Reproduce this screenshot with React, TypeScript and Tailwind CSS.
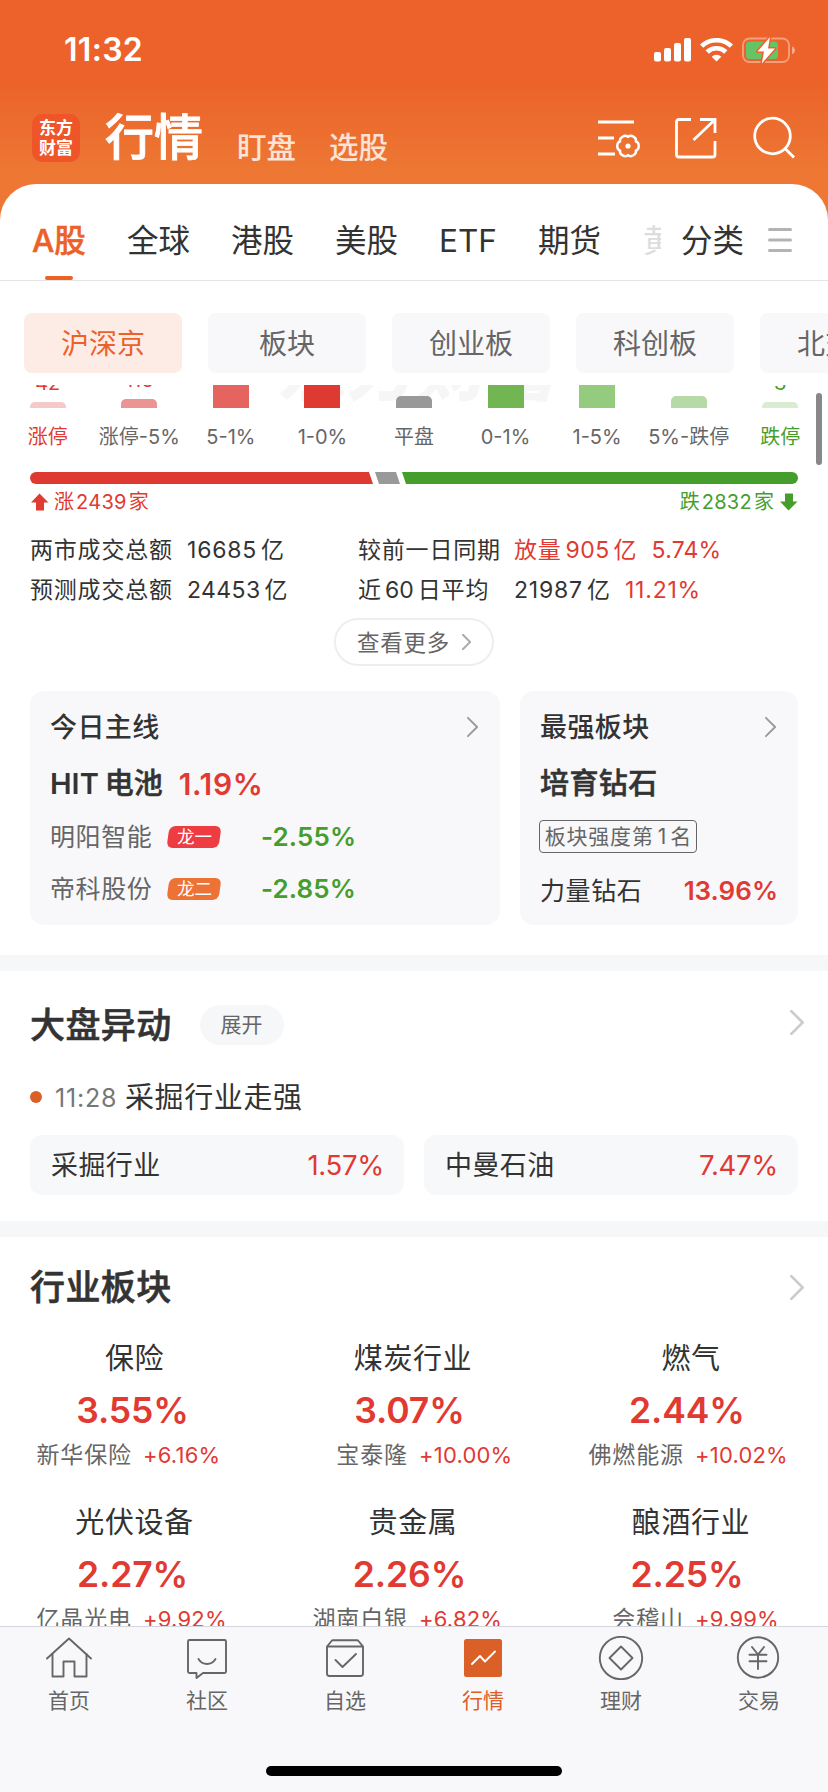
import React from "react";

const tabs = ["全球", "港股", "美股", "ETF", "期货"];

const markets = ["沪深京", "板块", "创业板", "科创板", "北交所"];

const buckets = [
  { label: "涨停", count: "42", bar: "h-1.5 bg-[#f5c9c9]", text: "text-[#e03a32]" },
  { label: "涨停-5%", count: "116", bar: "h-[9px] bg-[#ea9594]", text: "text-[#e03a32]" },
  { label: "5-1%", count: "", bar: "h-10 bg-[#e5645f]", text: "text-[#e03a32]" },
  { label: "1-0%", count: "", bar: "h-10 bg-[#df3a32]", text: "text-[#e03a32]" },
  { label: "平盘", count: "", bar: "h-3 bg-[#999999]", text: "text-[#666666]" },
  { label: "0-1%", count: "", bar: "h-10 bg-[#72b653]", text: "text-[#459e2c]" },
  { label: "1-5%", count: "", bar: "h-10 bg-[#95cb7e]", text: "text-[#459e2c]" },
  { label: "5%-跌停", count: "", bar: "h-3 bg-[#b6daa6]", text: "text-[#459e2c]" },
  { label: "跌停", count: "3", bar: "h-1.5 bg-[#d9ecd1]", text: "text-[#459e2c]" },
];

const leaders = [
  { name: "明阳智能", tag: "龙一", color: "bg-[#ed3d42]", change: "-2.55%" },
  { name: "帝科股份", tag: "龙二", color: "bg-[#ed7236]", change: "-2.85%" },
];

const movers = [
  { name: "采掘行业", change: "1.57%" },
  { name: "中曼石油", change: "7.47%" },
];

const industries = [
  { name: "保险", change: "3.55%", stock: "新华保险", stockChange: "+6.16%" },
  { name: "煤炭行业", change: "3.07%", stock: "宝泰隆", stockChange: "+10.00%" },
  { name: "燃气", change: "2.44%", stock: "佛燃能源", stockChange: "+10.02%" },
  { name: "光伏设备", change: "2.27%", stock: "亿晶光电", stockChange: "+9.92%" },
  { name: "贵金属", change: "2.26%", stock: "湖南白银", stockChange: "+6.82%" },
  { name: "酿酒行业", change: "2.25%", stock: "会稽山", stockChange: "+9.99%" },
];

// Each column drifts slightly to the right
const nameInset = ["pr-[7px]", "pr-[2px]", "pl-[2px]"];
const changeInset = ["pr-[11px]", "pr-[9px]", "pr-[6px]"];

const navItems = [
  {
    label: "首页",
    icon: (
      <>
        <path d="M2 22.5L24 2.5L46 22.5" />
        <path d="M7.5 18V40.5H18.5V25.5H29.5V40.5H41.5V18" />
      </>
    ),
  },
  {
    label: "社区",
    icon: (
      <>
        <path d="M6.5 4H41.5Q43 4 43 5.5V35.5Q43 37 41.5 37H20L13.5 42V37H6.5Q5 37 5 35.5V5.5Q5 4 6.5 4Z" />
        <path d="M15.5 23Q18.5 28 24 28T32.5 23" />
      </>
    ),
  },
  {
    label: "自选",
    icon: (
      <>
        <path d="M6 10.5L10.5 5Q11 4.3 12 4.3H36Q37 4.3 37.5 5L42 10.5V37.5Q42 40 39.5 40H8.5Q6 40 6 37.5ZM6 10.5H42" />
        <path d="M14.5 24L21.5 31L35 18" />
      </>
    ),
  },
  {
    label: "行情",
    active: true,
    icon: (
      <>
        <rect x="5" y="3" width="38" height="38" rx="2.5" fill="#db6027" stroke="none" />
        <path d="M13 28L21 20L26 25.5L36 15.5" stroke="#fff" />
      </>
    ),
  },
  {
    label: "理财",
    icon: (
      <>
        <circle cx="24" cy="22" r="21.2" />
        <path d="M24 10.5L35.5 22L24 33.5L12.5 22Z" />
      </>
    ),
  },
  {
    label: "交易",
    icon: (
      <>
        <circle cx="23" cy="21.5" r="20.2" />
        <path d="M17 11L23 18.5L29 11M14.5 18.7H31.5M14.5 25.3H31.5M23 18.5V33" />
      </>
    ),
  },
];

const Chevron: React.FC<{ className: string; strokeWidth?: number }> = ({ className, strokeWidth = 2 }) => (
  <svg className={className} viewBox="0 0 12 22" fill="none" stroke="currentColor" strokeWidth={strokeWidth} strokeLinecap="round">
    <path d="M1 1L11 11L1 21" />
  </svg>
);

const StatusBar: React.FC = () => (
  <div className="flex h-[100px] items-center justify-between pl-16 pr-8 text-white">
    <span className="text-[32px] font-semibold leading-10 tracking-[0.3px]">11:32</span>
    <div className="flex items-center">
      <svg width="37" height="24" viewBox="0 0 37 24" fill="currentColor">
        <rect x="0" y="14" width="7" height="9.5" rx="2" />
        <rect x="10" y="10" width="7" height="13.5" rx="2" />
        <rect x="20" y="5" width="7" height="18.5" rx="2" />
        <rect x="30" y="0" width="7" height="23.5" rx="2" />
      </svg>
      <svg className="ml-[9px]" width="33" height="24" viewBox="0 0 33 24" fill="none" stroke="currentColor" strokeWidth="4.6">
        <path d="M1.6 8.2A21.5 21.5 0 0 1 31.4 8.2" />
        <path d="M7.2 14A13.5 13.5 0 0 1 25.8 14" />
        <path d="M11.7 18.7A6.8 6.8 0 0 1 21.3 18.7L16.5 23.5Z" fill="currentColor" stroke="none" />
      </svg>
      <svg className="ml-[9px]" width="54" height="28" viewBox="0 0 54 28" fill="none">
        <rect x="1" y="2.5" width="46" height="23.5" rx="6.5" stroke="#fff" strokeOpacity="0.4" strokeWidth="1.8" />
        <path d="M50 10.5Q53 11.5 53 14.3T50 18.2Z" fill="#fff" fillOpacity="0.45" />
        <rect x="4" y="5.5" width="32" height="17.5" rx="3.5" fill="#65c466" />
        <path d="M28 1L15.5 15.5H22L19.8 27.5L33 12.5H26Z" fill="#fff" stroke="#ec622a" strokeWidth="3" strokeLinejoin="round" paintOrder="stroke" />
      </svg>
    </div>
  </div>
);

const Header: React.FC = () => (
  <div className="flex h-[84px] items-start px-8 text-white">
    <div className="mt-3.5 flex size-12 flex-col items-center justify-center rounded-[10px] bg-[#ee5528] text-[17px] font-bold leading-5">
      <span>东方</span>
      <span>财富</span>
    </div>
    <h1 className="ml-[25px] mt-2 text-[49px] font-medium leading-[60px] [-webkit-text-stroke:0.8px_white]">行情</h1>
    <span className="ml-[34px] mt-[27px] text-[29.5px] font-medium leading-10 text-white/80">盯盘</span>
    <span className="ml-[33px] mt-[27px] text-[29.5px] font-medium leading-10 text-white/80">选股</span>
    <div className="ml-auto mt-4 flex gap-[34px]">
      <svg width="43" height="44" viewBox="0 0 43 44" fill="none" stroke="currentColor" strokeWidth="2.8">
        <path d="M0 6H36M0 22H16M0 38H17" />
        <g transform="translate(30 30)" strokeWidth="2.4">
          {[0, 60, 120, 180, 240, 300].map((angle) => (
            <path key={angle} d="M0 -9.2C3 -11.8 8.7 -8.5 7.97 -4.6" transform={`rotate(${angle})`} strokeLinecap="round" />
          ))}
          <circle r="2.6" fill="currentColor" stroke="none" />
        </g>
      </svg>
      <svg width="42" height="44" viewBox="0 0 42 44" fill="none" stroke="currentColor" strokeWidth="2.8">
        <path d="M16 3.5H4Q1.5 3.5 1.5 6V38.5Q1.5 41 4 41H37.5Q40 41 40 38.5V25" />
        <path d="M25 3.5H40V17M39 4.5L18.5 24" />
      </svg>
      <svg className="ml-px" width="44" height="44" viewBox="0 0 44 44" fill="none" stroke="currentColor" strokeWidth="2.8">
        <circle cx="20.5" cy="20" r="17.8" />
        <path d="M33 32.5L42 41.5" />
      </svg>
    </div>
  </div>
);

const Tabs: React.FC = () => (
  <div className="flex h-[97px] items-stretch border-b border-[#e4e4e4] pl-8 pr-9 text-[31.5px] leading-[113px] text-[#333333]">
    <div className="relative mr-[43px] w-[52px] whitespace-nowrap font-medium text-[#eb6128] [-webkit-text-stroke:0.5px_#eb6128]">
      A股
      <div className="absolute bottom-0 left-[13px] h-1 w-7 rounded-[2px] bg-[#eb6128]" />
    </div>
    <div className="flex gap-[41px]">
      {tabs.map((tab) => (
        <span key={tab}>{tab}</span>
      ))}
    </div>
    <div className="ml-[42px] w-[18px] overflow-hidden text-[#dddddd]">黄金</div>
    <span className="ml-auto">分类</span>
    <svg className="ml-6 mt-[42px]" width="24" height="28" viewBox="0 0 24 28" stroke="#b3b3b3" strokeWidth="3" strokeLinecap="round">
      <path d="M1.5 3.5H22.5M1.5 14H22.5M1.5 24.5H22.5" />
    </svg>
  </div>
);

const Distribution: React.FC = () => (
  <>
    <div className="relative h-[23px] overflow-hidden">
      <div className="absolute bottom-0 left-[276px] text-[70px] font-black italic leading-[76px] text-[#f6f6f6]">东方财富</div>
      <div className="relative mx-[2px] grid h-full grid-cols-9">
        {buckets.map((bucket) => (
          <div key={bucket.label} className="flex h-[23px] flex-col items-center justify-end">
            <span className={`mb-[7px] shrink-0 text-[20px] leading-6 ${bucket.text}`}>{bucket.count}</span>
            <div className={`w-9 shrink-0 rounded-t-[5px] ${bucket.bar}`} />
          </div>
        ))}
      </div>
    </div>
    <div className="mx-[2px] mt-[17px] grid grid-cols-9 text-center text-[20px] leading-6 text-[#666666]">
      {buckets.map((bucket) => (
        <span key={bucket.label} className="whitespace-nowrap first:text-[#e03a32] last:text-[#459e2c]">
          {bucket.label}
        </span>
      ))}
    </div>
    <svg className="mx-[30px] mt-[23px] block" width="768" height="12" viewBox="0 0 768 12">
      <path d="M6 0H339L343 12H6A6 6 0 0 1 6 0Z" fill="#df3a32" />
      <path d="M345 0H366L370 12H349Z" fill="#999999" />
      <path d="M372 0H762A6 6 0 0 1 762 12H376Z" fill="#459e2c" />
    </svg>
    <div className="mt-1.5 flex h-6 items-center justify-between px-[30px] text-[20px] leading-6">
      <div className="flex items-center gap-[5px] text-[#e03a32]">
        <svg width="19" height="18" viewBox="0 0 19 18" fill="currentColor">
          <path d="M9.5 0.5L18.5 9.5H14V17.5H6V9.5H1Z" />
        </svg>
        <span className="flex gap-[2px]">
          <span>涨</span>
          <span className="tracking-[0.3px]">2439</span>
          <span>家</span>
        </span>
      </div>
      <div className="flex items-center gap-[5px] text-[#459e2c]">
        <span className="flex gap-[2px]">
          <span>跌</span>
          <span className="tracking-[0.3px]">2832</span>
          <span>家</span>
        </span>
        <svg width="19" height="18" viewBox="0 0 19 18" fill="currentColor">
          <path d="M9.5 17.5L18.5 8.5H14V0.5H6V8.5H1Z" />
        </svg>
      </div>
    </div>
  </>
);

const Turnover: React.FC = () => (
  <div className="mt-4 grid grid-cols-[328px_1fr] pl-[30px] text-[23px] leading-10 text-[#333333]">
    <div className="flex">
      <span className="w-[157px] tracking-[0.8px]">两市成交总额</span>
      <span className="tracking-[0.8px]">16685</span>
      <span className="ml-1">亿</span>
    </div>
    <div className="flex">
      <span className="w-[156px] tracking-[0.8px]">较前一日同期</span>
      <span className="flex gap-1 text-[#e03a32]">
        <span className="tracking-[0.8px]">放量</span>
        <span className="tracking-[0.4px]">905</span>
        <span>亿</span>
      </span>
      <span className="ml-[15px] tracking-[0.2px] text-[#e03a32]">5.74%</span>
    </div>
    <div className="flex">
      <span className="w-[157px] tracking-[0.8px]">预测成交总额</span>
      <span className="tracking-[0.4px]">24453</span>
      <span className="ml-1">亿</span>
    </div>
    <div className="flex">
      <span className="flex w-[156px] gap-1">
        <span>近</span>
        <span>60</span>
        <span className="tracking-[0.8px]">日平均</span>
      </span>
      <span className="tracking-[0.8px]">21987</span>
      <span className="ml-1">亿</span>
      <span className="ml-[15px] tracking-[0.8px] text-[#e03a32]">11.21%</span>
    </div>
  </div>
);

const Highlights: React.FC = () => (
  <div className="mx-[30px] mt-[25px] grid h-[234px] grid-cols-[470px_278px] gap-5 text-[#333333]">
    <div className="rounded-[14px] bg-[#f8f8fa] px-5 pt-[17px]">
      <div className="flex h-10 items-center justify-between pr-0.5">
        <span className="text-[27px] font-medium leading-10 tracking-[0.4px]">今日主线</span>
        <Chevron className="-mt-0.5 h-[22px] w-[11px] text-[#999999]" />
      </div>
      <div className="mt-4 flex text-[29px] leading-10">
        <span className="font-semibold">HIT</span>
        <span className="ml-1.5 font-medium [-webkit-text-stroke:0.5px_#333333]">电池</span>
        <span className="ml-4 text-[30px] font-semibold tracking-[0.6px] text-[#e03a32]">1.19%</span>
      </div>
      <div className="mt-[13px] flex flex-col gap-3">
        {leaders.map((leader) => (
          <div key={leader.name} className="flex h-10 items-center">
            <span className="w-[118px] text-[25px] leading-10 tracking-[0.6px] text-[#666666]">{leader.name}</span>
            <div className={`flex h-[22px] w-[52px] -skew-x-[8deg] items-center justify-center rounded-[6px] ${leader.color}`}>
              <span className="skew-x-[8deg] text-[17.5px] leading-[22px] text-white">{leader.tag}</span>
            </div>
            <span className="ml-[41px] text-[26px] font-semibold leading-10 tracking-[0.1px] text-[#459e2c]">{leader.change}</span>
          </div>
        ))}
      </div>
    </div>
    <div className="rounded-[14px] bg-[#f8f8fa] px-5 pt-[17px]">
      <div className="flex h-10 items-center justify-between pr-0.5">
        <span className="text-[27px] font-medium leading-10 tracking-[0.4px]">最强板块</span>
        <Chevron className="-mt-0.5 h-[22px] w-[11px] text-[#999999]" />
      </div>
      <div className="mt-4 text-[29px] font-medium leading-10 tracking-[0.4px] [-webkit-text-stroke:0.5px_#333333]">培育钻石</div>
      <div className="-ml-px mt-4 flex h-[33px] w-[158px] items-center justify-center gap-1 whitespace-nowrap rounded-[4px] border-[1.5px] border-[#666666] text-[21px] leading-[30px] text-[#666666]">
        <span className="tracking-[0.8px]">板块强度第</span>
        <span>1</span>
        <span>名</span>
      </div>
      <div className="mt-[18px] flex items-center justify-between leading-10">
        <span className="text-[25px] tracking-[0.6px]">力量钻石</span>
        <span className="text-[26px] font-semibold text-[#e03a32]">13.96%</span>
      </div>
    </div>
  </div>
);

const Movement: React.FC = () => (
  <section className="h-[250px] pt-[34px] text-[#333333]">
    <div className="flex h-10 items-center pl-[30px] pr-6">
      <h2 className="text-[35px] font-medium leading-10 tracking-[0.4px] [-webkit-text-stroke:0.6px_#333333]">大盘异动</h2>
      <span className="ml-7 h-10 w-[84px] rounded-full bg-[#f6f7f9] text-center text-[21px] leading-10 text-[#666666]">展开</span>
      <Chevron className="-mt-1.5 ml-auto h-[25px] w-3.5 text-[#cccccc]" strokeWidth={2.4} />
    </div>
    <div className="mt-8 flex h-10 items-center pl-[30px]">
      <span className="size-3 rounded-full bg-[#db6027]" />
      <span className="ml-[13px] w-[70px] pt-0.5 text-[25px] leading-10 tracking-[0.8px] text-[#777777]">11:28</span>
      <span className="pt-px text-[29px] leading-10 tracking-[0.6px]">采掘行业走强</span>
    </div>
    <div className="mx-[30px] mt-[18px] grid grid-cols-2 gap-5">
      {movers.map((mover) => (
        <div key={mover.name} className="flex h-[60px] items-center justify-between rounded-xl bg-[#f7f8fa] pl-[21px] pr-5 pt-0.5">
          <span className="text-[27px] tracking-[0.4px]">{mover.name}</span>
          <span className="text-[27.5px] tracking-[-0.3px] text-[#e03a32]">{mover.change}</span>
        </div>
      ))}
    </div>
  </section>
);

const Industries: React.FC = () => (
  <section className="pt-[30px] text-[#333333]">
    <div className="flex h-10 items-center justify-between pl-[30px] pr-6">
      <h2 className="text-[35px] font-medium leading-10 tracking-[0.4px] [-webkit-text-stroke:0.6px_#333333]">行业板块</h2>
      <Chevron className="h-[25px] w-3.5 text-[#cccccc]" strokeWidth={2.4} />
    </div>
    <div className="mt-8 grid grid-cols-3">
      {industries.map((item, i) => (
        <div key={item.name} className="h-[164px]">
          <div className={`text-center text-[29px] leading-10 tracking-[0.6px] ${nameInset[i % 3]}`}>{item.name}</div>
          <div className={`mt-3 text-center text-[35.5px] font-semibold leading-10 tracking-[-0.1px] text-[#e03a32] ${changeInset[i % 3]}`}>{item.change}</div>
          <div className="mt-2 flex leading-8">
            <span className="w-[132px] text-right text-[23px] tracking-[0.9px] text-[#666666]">{item.stock}</span>
            <span className="ml-[11px] text-[22px] tracking-[0.2px] text-[#e03a32]">{item.stockChange}</span>
          </div>
        </div>
      ))}
    </div>
  </section>
);

const BottomNav: React.FC = () => (
  <nav className="flex h-[166px] shrink-0 flex-col items-center border-t border-[#d5d5dd] bg-[#f8f8fa]">
    <div className="grid w-full grid-cols-6 pt-[9px]">
      {navItems.map((item) => (
        <div key={item.label} className={`flex flex-col items-center ${item.active ? "text-[#db6027]" : "text-[#666666]"}`}>
          <svg width="48" height="44" viewBox="0 0 48 44" fill="none" stroke="currentColor" strokeWidth="1.9" strokeLinejoin="round" strokeLinecap="round">
            {item.icon}
          </svg>
          <span className="mt-1.5 text-[21px] leading-[30px]">{item.label}</span>
        </div>
      ))}
    </div>
    <div className="mb-4 mt-auto h-2.5 w-[296px] rounded-full bg-black" />
  </nav>
);

const App: React.FC = () => {
  return (
    <div className="flex h-[1792px] w-[828px] flex-col overflow-hidden bg-[linear-gradient(to_bottom,#ec622a_80px,#ed7733_170px)] font-['Inter','Noto_Sans_CJK_SC',sans-serif]">
      <StatusBar />
      <Header />
      <main className="relative flex min-h-0 flex-1 flex-col rounded-t-[36px] bg-white">
        <Tabs />

        <div className="flex shrink-0 gap-[26px] overflow-hidden pb-3 pl-6 pt-8">
          {markets.map((market, i) => (
            <div
              key={market}
              className={`h-[60px] w-[158px] shrink-0 rounded-lg text-center text-[28px] leading-[62px] ${i === 0 ? "bg-[#fdece5] text-[#eb6128]" : "bg-[#f8f8fa] text-[#666666]"}`}
            >
              {market}
            </div>
          ))}
        </div>

        <div className="min-h-0 flex-1 overflow-hidden">
          <Distribution />
          <Turnover />
          <div className="mx-auto mt-2 flex h-12 w-40 items-center justify-center gap-3 rounded-full border-2 border-[#eeeeee] text-[22.5px] leading-10 text-[#666666]">
            <span className="pt-px tracking-[0.8px]">查看更多</span>
            <Chevron className="h-4 w-[9px] text-[#aaaaaa]" strokeWidth={2.6} />
          </div>
          <Highlights />
          <div className="mt-[30px] h-4 bg-[#f6f7f9]" />
          <Movement />
          <div className="h-4 bg-[#f6f7f9]" />
          <Industries />
        </div>

        {/* Scroll thumb */}
        <div className="absolute right-1.5 top-[209px] h-[72px] w-1.5 rounded-full bg-[#888888]" />
      </main>
      <BottomNav />
    </div>
  );
};

export default App;
